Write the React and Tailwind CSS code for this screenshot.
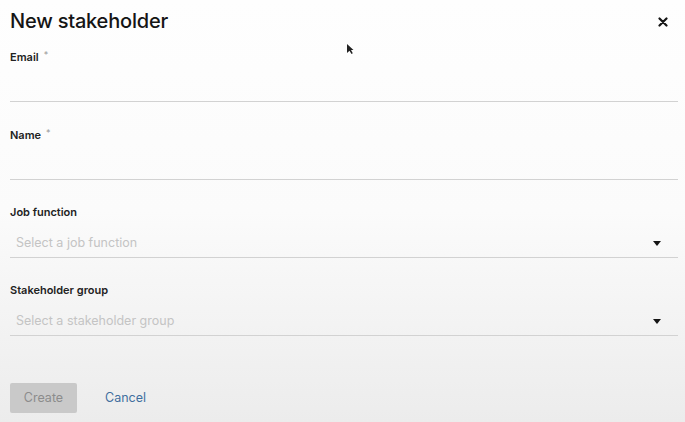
import React from "react";

function Caret() {
  return (
    <svg width="8" height="5" viewBox="0 0 8 5" className="shrink-0 mb-[5px]">
      <path d="M0 0 H8 L4 5 Z" fill="#151515" />
    </svg>
  );
}

function TextField({ label, required }) {
  return (
    <div className="flex flex-col">
      <div className="flex items-start gap-[5px] text-[11px] font-semibold text-[#222] leading-[14px]">
        <span>{label}</span>
        {required && <span className="text-[9px] font-normal text-[#999] leading-[10px]">*</span>}
      </div>
      <div className="h-[38px] border-b border-[#d2d2d2]" />
    </div>
  );
}

function SelectField({ label, placeholder }) {
  return (
    <div className="flex flex-col">
      <div className="text-[11px] font-semibold text-[#222] leading-[14px]">{label}</div>
      <div className="h-[39px] border-b border-[#d2d2d2] flex items-end justify-between pl-[6px] pr-[17px] pb-[6px]">
        <span className="text-[12.5px] leading-[16px] text-[#c4c4c4]">{placeholder}</span>
        <Caret />
      </div>
    </div>
  );
}

export default function App() {
  return (
    <div
      className="relative w-[685px] h-[422px] overflow-hidden bg-[linear-gradient(to_bottom,#fefefe_0%,#fbfbfb_50%,#ececec_100%)]"
      style={{ fontFamily: "Inter, 'Open Sans', sans-serif" }}
    >
      <div className="flex flex-col pl-[10px] pr-[7px]">
        <div className="flex items-center justify-between h-[40px] pt-[1px]">
          <h1 className="text-[20px] font-[450] text-[#151515] tracking-[-0.2px]">New stakeholder</h1>
          <svg width="10" height="10" viewBox="0 0 10 10" className="mr-[10px] mt-[3px]">
            <path d="M1.5 1.5 L8.5 8.5 M8.5 1.5 L1.5 8.5" stroke="#151515" strokeWidth="2.2" strokeLinecap="round" />
          </svg>
        </div>
        <div className="flex flex-col gap-[26px] mt-[10px]">
          <TextField label="Email" required />
          <TextField label="Name" required />
        </div>
        <div className="flex flex-col gap-[25px] mt-[25px]">
          <SelectField label="Job function" placeholder="Select a job function" />
          <SelectField label="Stakeholder group" placeholder="Select a stakeholder group" />
        </div>
        <div className="flex items-center gap-[28px] mt-[47px]">
          <button className="w-[67px] h-[30px] rounded-[2px] bg-[#c9c9c9] text-[12.5px] text-[#8c8c8c]">Create</button>
          <button className="text-[12.5px] text-[#3f6f9f]">Cancel</button>
        </div>
      </div>
      <svg width="8" height="12" viewBox="0 0 8 12" className="absolute left-[346px] top-[43px]">
        <path d="M1 1 L1 10 L3.5 7.8 L5.5 11 L6.8 10.3 L5 7 L7.5 7 Z" fill="#222" />
      </svg>
    </div>
  );
}
